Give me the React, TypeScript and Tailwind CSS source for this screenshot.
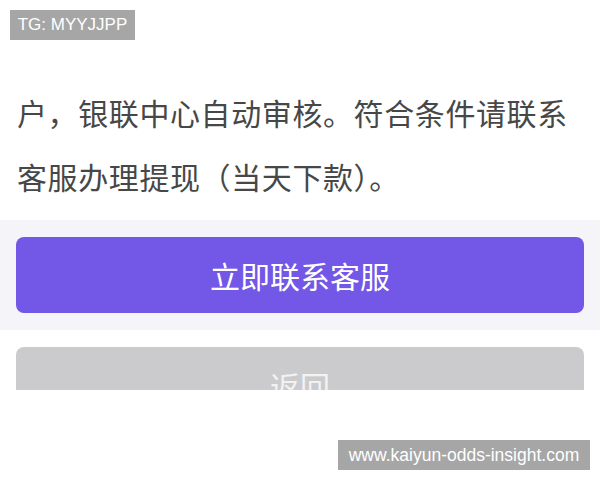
export default function App() {
  const cjk = { fontFamily: '"Noto Sans CJK SC", "Noto Sans", sans-serif' };
  const latin = { fontFamily: '"Liberation Sans", Arial, sans-serif' };

  return (
    <div className="relative h-[480px] w-[600px] overflow-hidden bg-white" style={cjk}>
      <div className="absolute left-[10px] top-[10px] flex h-[30px] w-[125px] items-center justify-center bg-[#a6a6a6] text-[17px] text-white" style={latin}>
        TG: MYYJJPP
      </div>

      <div className="pt-[80px]">
        <p className="px-[17px] text-[30px] leading-[64px] tracking-[0.6px] text-[#474747]">
          户，银联中心自动审核。符合条件请联系
          <br />
          客服办理提现（当天下款）。
        </p>
      </div>

      <div className="mt-[12px] bg-[#f5f5f9] px-[16px] py-[17px]">
        <button className="flex h-[76px] w-full items-center justify-center rounded-[8px] bg-[#7357e6] text-[30px] text-white">
          立即联系客服
        </button>
      </div>

      <div className="px-[16px] pt-[17px]">
        <div className="h-[43px] overflow-hidden rounded-t-[8px] bg-[#cbcbcd]">
          <div className="flex h-[76px] items-center justify-center text-[30px] text-[#f2f2f2]">返回</div>
        </div>
      </div>

      <div className="absolute left-[338px] top-[440px] flex h-[30px] w-[252px] items-center justify-center bg-[#a6a6a6] text-[17.5px] text-white" style={latin}>
        www.kaiyun-odds-insight.com
      </div>
    </div>
  );
}
